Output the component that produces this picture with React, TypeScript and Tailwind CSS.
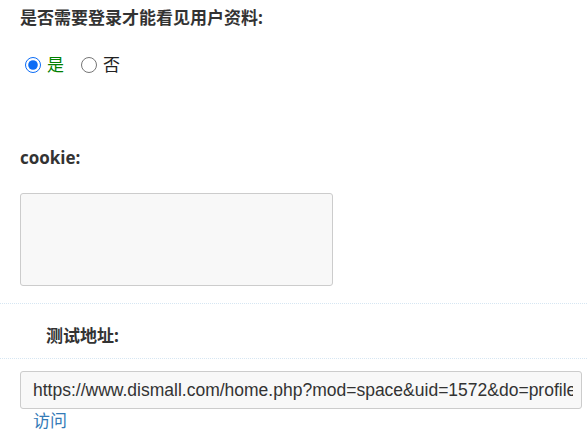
import React from 'react';

const App: React.FC = () => {
    return (
        <div className="w-[587px] h-[437px] overflow-hidden bg-white text-[#333] font-['Open_Sans','Noto_Sans_CJK_SC',sans-serif]">
            <div className="px-[20px]">
                <h3 className="pt-[6px] text-[17px] leading-[24px] font-bold">是否需要登录才能看见用户资料:</h3>

                <div className="mt-[23px] flex items-center h-[24px] text-[17px]">
                    <label className="flex items-center">
                        <input type="radio" name="needlogin" defaultChecked className="ml-[5px] mr-[6px] w-[16px] h-[16px] accent-[#0b6cf5]" />
                        <span className="text-[#008000]">是</span>
                    </label>
                    <label className="flex items-center ml-[17px]">
                        <input type="radio" name="needlogin" className="mr-[6px] w-[16px] h-[16px]" />
                        <span className="text-[#222]">否</span>
                    </label>
                </div>

                <h3 className="mt-[69px] text-[17px] leading-[24px] font-bold">cookie:</h3>

                <textarea className="mt-[23px] block w-[313px] h-[93px] bg-[#f8f8f8] border border-[#cccccc] rounded-[3px] resize-none outline-none" />
            </div>

            <div className="mt-[17px] border-t border-dotted border-[#d6e6f2]">
                <div className="pl-[46px] pt-[20px] pb-[10px] text-[17px] leading-[24px] font-bold">测试地址:</div>
            </div>

            <div className="border-t border-dotted border-[#d6e6f2] px-[20px] pr-[5px]">
                <input
                    type="text"
                    readOnly
                    value="https://www.dismall.com/home.php?mod=space&uid=1572&do=profile"
                    className="mt-[12px] block w-full h-[38px] pl-[12px] pr-[8px] bg-[#f8f8f8] border border-[#cccccc] rounded-[3px] text-[17.5px] text-[#333] font-['Liberation_Sans',sans-serif] outline-none"
                />
                <a href="#" className="block pl-[13px] text-[17px] leading-[24px] text-[#337ab7]">访问</a>
            </div>
        </div>
    );
};

export default App;
